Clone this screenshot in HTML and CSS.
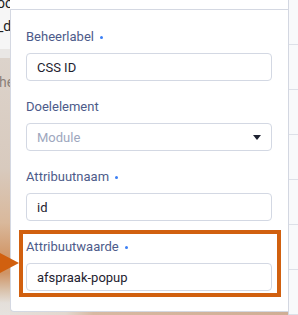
FILE: index.html
```html
<!DOCTYPE html>
<html lang="nl">
<head>
<meta charset="utf-8">
<link rel="stylesheet" href="styles.css">
</head>
<body>
<div class="page">
  <div class="bg-left">
    <div class="bg-top">
      <div class="bg-line l1">oo</div>
      <div class="bg-line l2">_d</div>
    </div>
    <div class="bg-photo">
      <div class="bg-line l3">he</div>
    </div>
  </div>

  <div class="stage">
    <div class="panel">
      <div class="field">
        <div class="label">Beheerlabel<span class="req"></span></div>
        <div class="input">CSS ID</div>
      </div>
      <div class="field">
        <div class="label">Doelelement</div>
        <div class="input select">
          <span class="placeholder">Module</span>
          <svg class="caret" width="8" height="5" viewBox="0 0 8 5"><polygon points="0,0 8,0 4,5" fill="#1e2230"/></svg>
        </div>
      </div>
      <div class="field">
        <div class="label">Attribuutnaam<span class="req"></span></div>
        <div class="input">id</div>
      </div>
      <div class="field">
        <div class="label">Attribuutwaarde<span class="req"></span></div>
        <div class="input">afspraak-popup</div>
      </div>
    </div>
  </div>

  <div class="side">
    <div class="side-row"></div>
    <div class="side-row"></div>
    <div class="side-row"></div>
    <div class="side-row"></div>
    <div class="side-row"></div>
    <div class="side-row"></div>
    <div class="side-row"></div>
  </div>

  <div class="highlight"></div>
  <svg class="pointer" width="20" height="24" viewBox="0 0 20 24"><polygon points="0,1 19,11 0,21" fill="#d1600f"/></svg>
</div>
</body>
</html>
```

FILE: styles.css
```css
* { box-sizing: border-box; }

html, body {
  margin: 0;
  padding: 0;
  background: #ffffff;
}

body {
  font-family: Roboto, "Liberation Sans", sans-serif;
}

.page {
  position: relative;
  width: 298px;
  height: 315px;
  overflow: hidden;
  display: grid;
  grid-template-columns: 10px 278px 10px;
}

/* left background strip (page behind the panel) */
.bg-left {
  display: flex;
  flex-direction: column;
  overflow: hidden;
  white-space: nowrap;
}

.bg-top {
  height: 58px;
  background: linear-gradient(to bottom, #f6f6f6 0 49px, #e9e7e5 49px 58px);
}

.bg-photo {
  flex: 1;
  background: linear-gradient(to bottom,
    #dcd3cb 0,
    #d8cabe 110px,
    #d9b89b 165px,
    #d29a6d 195px,
    #cf9466 215px,
    #d9c1aa 232px,
    #e4dfda 245px,
    #e6e2de 100%);
}

.bg-line {
  font-size: 14px;
  line-height: 14px;
  height: 14px;
}

.l1 { margin-top: -4px; text-indent: -3px; color: #222; }
.l2 { margin-top: 9px; text-indent: -3px; color: #222; }
.l3 { margin-top: 17px; text-indent: -1px; color: #8a8078; }

/* middle column */
.stage {
  padding-top: 9px;
  background:
    linear-gradient(to bottom, #ffffff 0 9px, transparent 9px),
    linear-gradient(to right, #e5e0db 0, #e2d8cf 20%, #d8b9a2 30%, #cfae95 100%);
}

.panel {
  height: 303px;
  background: #ffffff;
  border: 1px solid #d4d8e2;
  border-right: 0;
  border-radius: 0 0 0 4px;
  padding: 19px 16px 0 15px;
}

.field {
  margin-bottom: 18px;
}

.label {
  font-size: 13px;
  line-height: 16px;
  color: #4d5b8a;
  margin-bottom: 8px;
}

.req {
  display: inline-block;
  width: 3px;
  height: 3px;
  border-radius: 50%;
  background: #3b7ff5;
  margin-left: 6px;
  vertical-align: middle;
}

.input {
  height: 28px;
  border: 1px solid #d3d8e3;
  border-radius: 4px;
  padding: 0 10px;
  display: flex;
  align-items: center;
  font-size: 13px;
  color: #1e2230;
}

.select {
  justify-content: space-between;
}

.placeholder {
  color: #9ea7be;
}

.caret {
  display: block;
}

/* right strip */
.side {
  border-left: 1px solid #d3d7e1;
  background: #f8f9fb;
  padding-top: 1px;
}

.side-row {
  height: 45px;
  border-bottom: 1px solid #dde0e8;
}

.side-row:first-child {
  height: 44px;
}

/* annotation overlay */
.highlight {
  position: absolute;
  left: 19px;
  top: 230px;
  width: 262px;
  height: 67px;
  border: 4px solid #d1600f;
}

.pointer {
  position: absolute;
  left: 0;
  top: 252px;
}
```
